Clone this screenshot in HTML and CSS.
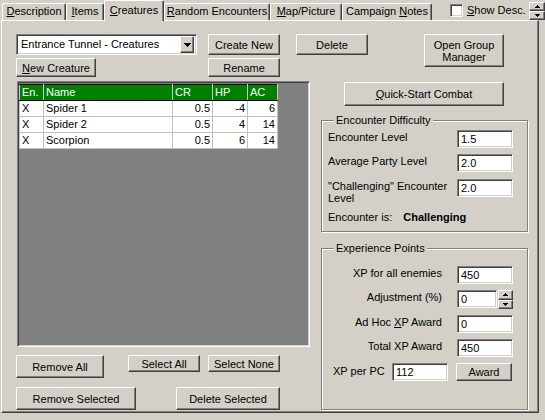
FILE: index.html
```html
<!DOCTYPE html>
<html lang="en">
<head>
    <meta charset="UTF-8">
    <title>Encounter - Creatures</title>
    <link rel="stylesheet" href="styles.css">
</head>
<body>
<div class="tabs">
    <div class="tab" id="t_desc"><u>D</u>escription</div>
    <div class="tab" id="t_items"><u>I</u>tems</div>
    <div class="tab on" id="t_crea"><u>C</u>reatures</div>
    <div class="tab" id="t_rand"><u>R</u>andom Encounters</div>
    <div class="tab" id="t_map"><u>M</u>ap/Picture</div>
    <div class="tab" id="t_notes">Campaign <u>N</u>otes</div>
    <label class="show_desc"><span class="check sunk"></span><u>S</u>how Desc.</label>
    <div class="spin tab_spin">
        <a class="btn up"><svg width="5" height="3"><path d="M2 0h1v1h1v1h1v1h-5v-1h1v-1h1z"/></svg></a>
        <a class="btn dn"><svg width="5" height="3"><path d="M0 0h5v1h-1v1h-1v1h-1v-1h-1v-1h-1z"/></svg></a>
    </div>
</div>
<div class="panel">
    <div class="head">
        <div class="col_a">
            <div class="combo sunk">
                <span>Entrance Tunnel - Creatures</span>
                <a class="btn drop"><svg width="7" height="4"><path d="M0 0h7v1h-1v1h-1v1h-1v1h-1v-1h-1v-1h-1v-1h-1z"/></svg></a>
            </div>
            <button class="btn" id="new_crea"><u>N</u>ew Creature</button>
        </div>
        <div class="col_b">
            <button class="btn" id="create">Create New</button>
            <button class="btn" id="rename">Rename</button>
        </div>
        <button class="btn" id="delete">Delete</button>
        <button class="btn" id="group">Open Group<br>Manager</button>
    </div>
    <div class="body">
        <div class="left">
            <div class="grid">
                <table class="list">
                    <tr><th class="c_en">En.</th><th class="c_name">Name</th><th class="c_cr">CR</th><th class="c_hp">HP</th><th class="c_ac">AC</th></tr>
                    <tr><td>X</td><td>Spider 1</td><td class="num">0.5</td><td class="num">-4</td><td class="num">6</td></tr>
                    <tr><td>X</td><td>Spider 2</td><td class="num">0.5</td><td class="num">4</td><td class="num">14</td></tr>
                    <tr><td>X</td><td>Scorpion</td><td class="num">0.5</td><td class="num">6</td><td class="num">14</td></tr>
                </table>
            </div>
            <div class="row1">
                <button class="btn" id="rem_all">Remove All</button>
                <button class="btn" id="sel_all">Select All</button>
                <button class="btn" id="sel_none">Select None</button>
            </div>
            <div class="row2">
                <button class="btn" id="rem_sel">Remove Selected</button>
                <button class="btn" id="del_sel">Delete Selected</button>
            </div>
        </div>
        <div class="right">
            <button class="btn" id="quick"><u>Q</u>uick-Start Combat</button>
            <fieldset class="group" id="diff">
                <legend>Encounter Difficulty</legend>
                <div class="field"><span>Encounter Level</span><input class="sunk" value="1.5"></div>
                <div class="field"><span>Average Party Level</span><input class="sunk" value="2.0"></div>
                <div class="field tall"><span>"Challenging" Encounter<br>Level</span><input class="sunk" value="2.0"></div>
                <p class="result">Encounter is: <b>Challenging</b></p>
            </fieldset>
            <fieldset class="group" id="xp">
                <legend>Experience Points</legend>
                <div class="xp_grid">
                    <span>XP for all enemies</span><input class="sunk" value="450">
                    <span>Adjustment (%)</span>
                    <div class="adj">
                        <input class="sunk" value="0">
                        <div class="spin">
                            <a class="btn up"><svg width="5" height="3"><path d="M2 0h1v1h1v1h1v1h-5v-1h1v-1h1z"/></svg></a>
                            <a class="btn dn"><svg width="5" height="3"><path d="M0 0h5v1h-1v1h-1v1h-1v-1h-1v-1h-1z"/></svg></a>
                        </div>
                    </div>
                    <span>Ad Hoc <u>X</u>P Award</span><input class="sunk" value="0">
                    <span>Total XP Award</span><input class="sunk" value="450">
                </div>
                <div class="per_pc">
                    <span>XP per PC</span><input class="sunk" value="112"><button class="btn" id="award">Award</button>
                </div>
            </fieldset>
        </div>
    </div>
</div>
</body>
</html>
```

FILE: styles.css
```css
*{margin: 0;padding: 0;box-sizing: border-box;}
body{width: 545px;height: 420px;overflow: hidden;background: #d4d0c8;color: #000;font: 11px/13px "Liberation Sans", Arial, sans-serif;}

/* raised 3d button and sunken field */
.btn{display: flex;align-items: center;justify-content: center;background: #d4d0c8;color: #000;font: inherit;line-height: 12px;text-align: center;border: 1px solid;border-color: #fff #404040 #404040 #fff;box-shadow: inset -1px -1px #808080;}
.sunk{background: #fff;border: 1px solid;border-color: #808080 #fff #fff #808080;box-shadow: inset 1px 1px #404040, inset -1px -1px #d4d0c8;}
input.sunk{display: block;width: 56px;height: 18px;padding: 0 3px;font: inherit;color: #000;outline: none;}
svg{display: block;}

/* tab strip */
.tabs{display: flex;align-items: flex-end;height: 20px;padding-left: 2px;position: relative;z-index: 1;}
.tab{height: 17px;border: 1px solid #fff;border-bottom: 0;border-right-color: #404040;border-radius: 2px 2px 0 0;box-shadow: inset -1px 0 #808080;text-align: center;line-height: 15px;}
.tab.on{height: 21px;margin-bottom: -1px;background: #d4d0c8;line-height: 19px;}
#t_desc{width: 64px;}
#t_items{width: 38px;}
#t_crea{width: 60px;}
#t_rand{width: 106px;}
#t_map{width: 72px;}
#t_notes{width: 90px;}
.show_desc{display: flex;align-items: center;align-self: flex-start;margin: 4px 0 0 18px;}
.check{width: 13px;height: 13px;margin-right: 4px;}
.spin{display: flex;flex-direction: column;width: 16px;}
.spin .btn{flex: 1;}
.tab_spin{align-self: flex-start;height: 18px;margin: 2px 0 0 auto;}

/* page body */
.panel{margin-left: 1px;width: 538px;height: 393px;border: 1px solid;border-color: #fff #404040 #404040 #fff;box-shadow: inset -1px -1px #808080;padding: 13px 0 0 14px;}
.head{display: flex;align-items: flex-start;}
.col_a{width: 181px;}
.combo{display: flex;align-items: center;height: 21px;padding: 2px;}
.combo span{flex: 1;padding-left: 2px;}
.drop{width: 14px;height: 17px;}
#new_crea{width: 80px;height: 19px;margin-top: 3px;}
.col_b{width: 72px;margin-left: 11px;}
#create{width: 72px;height: 21px;}
#rename{width: 72px;height: 19px;margin-top: 3px;}
#delete{width: 72px;height: 21px;margin-left: 16px;}
#group{width: 80px;height: 33px;margin-left: 56px;}

.body{display: flex;margin-top: 4px;}
.left{width: 294px;}
.grid{margin-left: 1px;height: 266px;background: #808080;border: 1px solid;border-color: #808080 #fff #fff #808080;box-shadow: inset 1px 1px #404040, inset -1px -1px #d4d0c8;padding: 1px;}
.list{width: 258px;table-layout: fixed;border-collapse: collapse;border: 1px solid #000;background: #fff;margin-top: 1px;}
.list th, .list td{height: 16px;padding: 0 2px;border: 1px solid #c0c0c0;font-weight: normal;text-align: left;white-space: nowrap;}
.list th{background: #008000;color: #fff;border-color: #000 #c8c8c8;}
.list .num{text-align: right;}
.c_en{width: 24px;}
.c_name{width: 129px;}
.c_cr{width: 40px;}
.c_hp{width: 35px;}
.c_ac{width: 30px;}
.row1, .row2{display: flex;align-items: flex-start;}
.row1{margin-top: 8px;}
.row2{margin-top: 9px;}
#rem_all{width: 88px;height: 23px;}
#sel_all{width: 72px;height: 17px;margin-left: 24px;}
#sel_none{width: 72px;height: 17px;margin-left: 8px;}
#rem_sel{width: 120px;height: 23px;}
#del_sel{width: 104px;height: 23px;margin-left: 40px;}

.right{width: 207px;margin-left: 11px;}
#quick{width: 160px;height: 24px;margin: 1px 0 0 23px;}

/* etched group boxes */
.group{border: 1px solid #808080;box-shadow: 1px 1px #fff, inset 1px 1px #fff;min-inline-size: 0;}
.group legend{margin-left: 6px;padding: 0 2px;background: #d4d0c8;line-height: 13px;}
#diff{margin-top: 8px;padding: 3px 14px 7px 6px;}
.field{display: flex;justify-content: space-between;align-items: flex-start;}
.field span{padding-top: 1px;}
.field + .field{margin-top: 6px;}
.field.tall{margin-top: 7px;height: 24px;line-height: 12px;}
.result{margin-top: 8px;}
.result b{margin-left: 8px;}
#xp{margin-top: 10px;padding: 11px 14px 28px 6px;}
.xp_grid{display: grid;grid-template-columns: 1fr 56px;column-gap: 15px;row-gap: 6px;text-align: right;}
.xp_grid span{padding-top: 1px;}
.adj{display: flex;gap: 1px;}
.adj input.sunk{width: 40px;}
.adj .spin{width: 15px;height: 19px;}
.per_pc{display: flex;align-items: flex-start;margin-top: 6px;}
.per_pc span{width: 59px;margin-left: 5px;padding-top: 2px;}
#award{width: 56px;height: 18px;margin-left: 8px;}
```
